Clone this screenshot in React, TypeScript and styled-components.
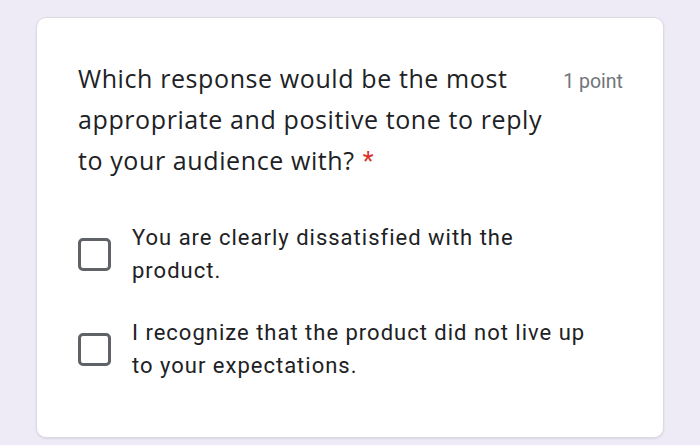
import React from "react";
import styled, { createGlobalStyle } from "styled-components";

const GlobalStyle = createGlobalStyle`
  html, body {
    margin: 0;
    padding: 0;
    background: #eeebf6;
  }
  body {
    font-family: Roboto, "Noto Sans", sans-serif;
  }
`;

const Page = styled.div`
  width: 700px;
  height: 445px;
  padding: 17px 36px 0 36px;
  box-sizing: border-box;
`;

const Card = styled.div`
  background: #ffffff;
  border-radius: 10px;
  border: 1px solid #dcdae2;
  box-shadow: 0 1px 2px rgba(60, 64, 67, 0.12);
  height: 421px;
  box-sizing: border-box;
  padding: 40px 40px 0 41px;
`;

const Header = styled.div`
  display: flex;
  justify-content: space-between;
  align-items: flex-start;
`;

const Question = styled.div`
  width: 480px;
  font-family: "Open Sans", Roboto, sans-serif;
  font-size: 25px;
  letter-spacing: 0.6px;
  line-height: 41px;
  color: #202124;
`;

const Required = styled.span`
  color: #d93025;
  margin-left: 8px;
  font-family: Roboto, sans-serif;
`;

const Points = styled.div`
  padding-top: 3px;
  font-size: 19.5px;
  line-height: 41px;
  color: #70757a;
`;

const Options = styled.div`
  display: flex;
  flex-direction: column;
  gap: 29px;
  margin-top: 39px;
`;

const Option = styled.label`
  display: flex;
  align-items: center;
  gap: 21px;
`;

const Box = styled.span`
  flex: none;
  width: 33px;
  height: 33px;
  box-sizing: border-box;
  border: 3px solid #5f6368;
  border-radius: 5px;
`;

const OptionText = styled.div`
  font-size: 22px;
  letter-spacing: 1px;
  line-height: 33px;
  color: #202124;
  width: 475px;
`;

const options = [
  "You are clearly dissatisfied with the product.",
  "I recognize that the product did not live up to your expectations.",
];

export default function App() {
  return (
    <>
      <GlobalStyle />
      <Page>
        <Card>
          <Header>
            <Question>
              Which response would be the most appropriate and positive tone to
              reply to your audience with?
              <Required>*</Required>
            </Question>
            <Points>1 point</Points>
          </Header>
          <Options>
            {options.map((o) => (
              <Option key={o}>
                <Box />
                <OptionText>{o}</OptionText>
              </Option>
            ))}
          </Options>
        </Card>
      </Page>
    </>
  );
}
